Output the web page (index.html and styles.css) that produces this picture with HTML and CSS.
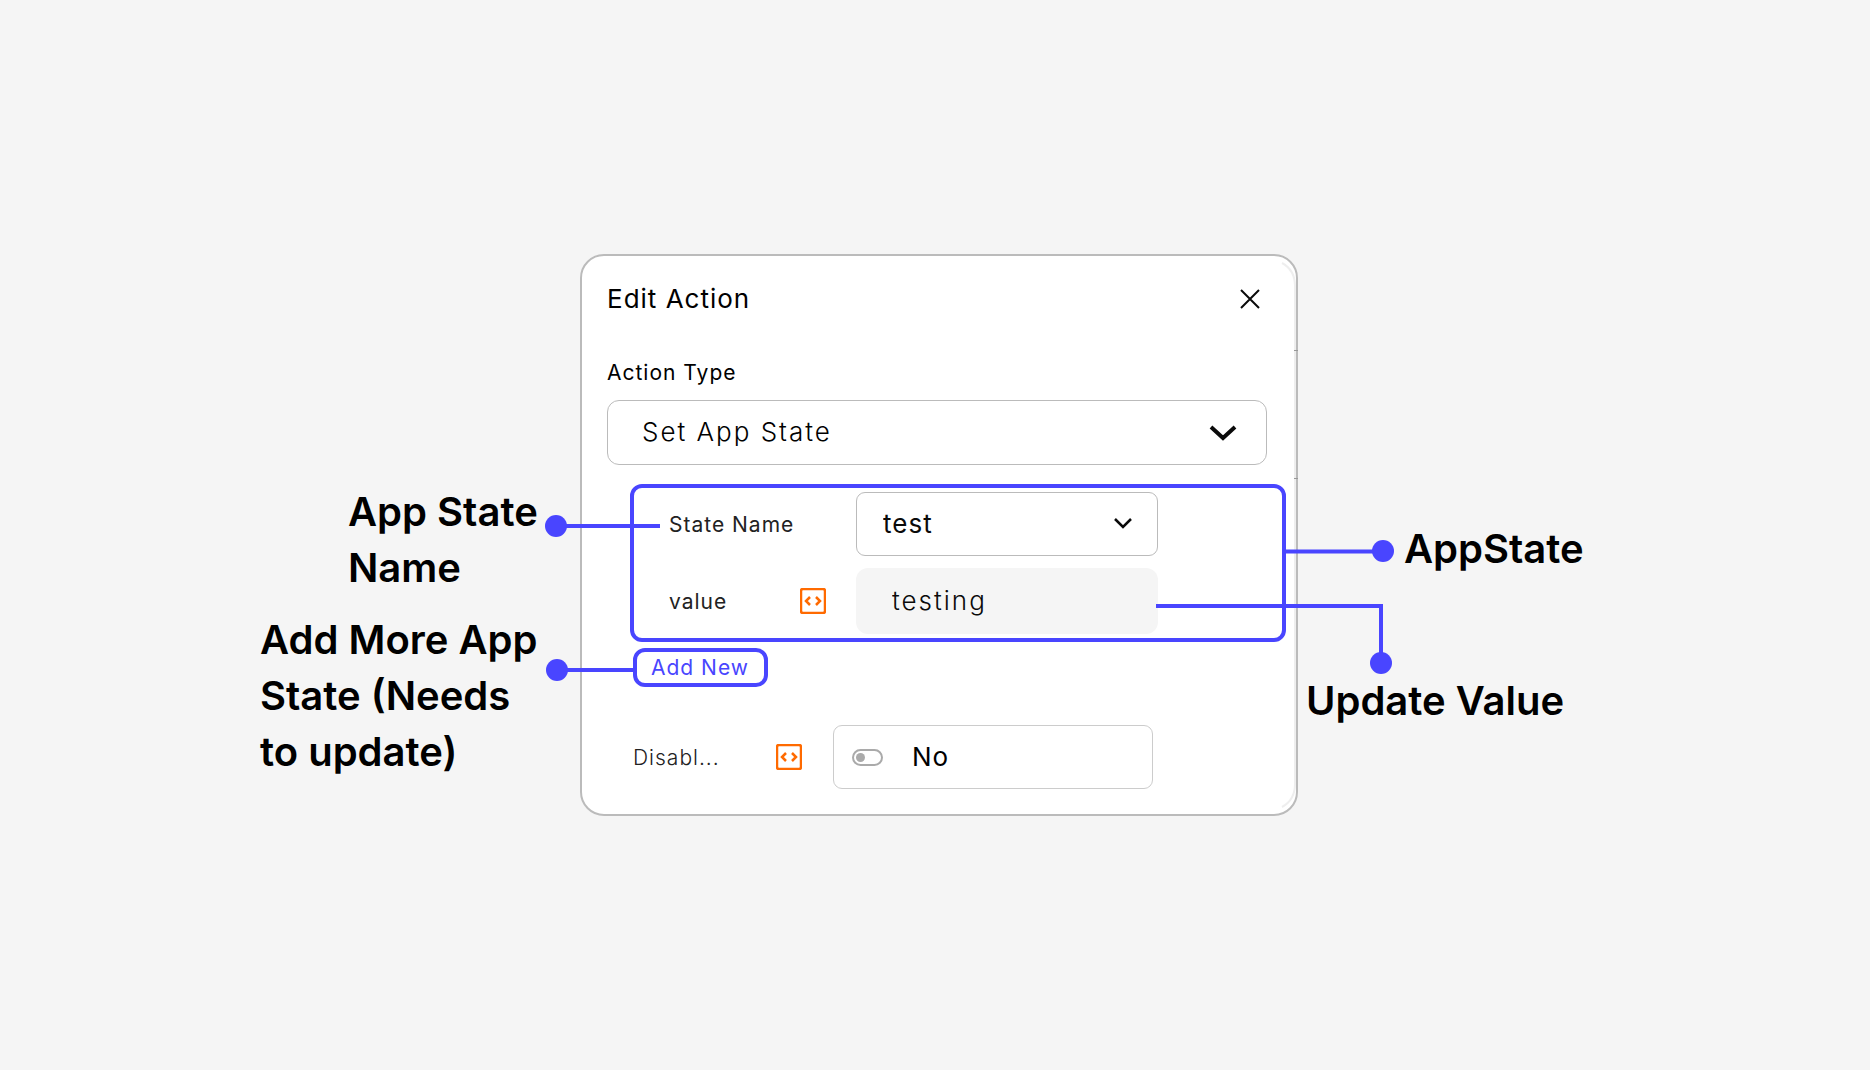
FILE: index.html
```
<!DOCTYPE html>
<html lang="en">
<head>
    <meta charset="UTF-8">
    <meta name="viewport" content="width=device-width, initial-scale=1.0">
    <title>Edit Action</title>
    <link rel="stylesheet" href="styles.css">
</head>
<body>
    <main class="guide">
        <aside class="notes notes-left">
            <p class="note note-name">App State Name</p>
            <p class="note note-add">Add More App State (Needs to update)</p>
        </aside>

        <form class="dialog">
            <header class="dialog-header">
                <h1>Edit Action</h1>
                <button type="button" class="close-btn" aria-label="Close">
                    <svg width="20" height="20" viewBox="0 0 20 20"><path d="M1 1L19 19M19 1L1 19" stroke-width="2"/></svg>
                </button>
            </header>

            <label class="type-label" for="actionType">Action Type</label>
            <div class="select-wrap type-select">
                <select id="actionType"><option>Set App State</option></select>
                <svg width="28" height="18" viewBox="0 0 28 18"><path d="M2 3L14 14L26 3" stroke-width="4"/></svg>
            </div>

            <div class="state-box">
                <label for="stateName">State Name</label>
                <div class="select-wrap name-select">
                    <select id="stateName"><option>test</option></select>
                    <svg width="20" height="12" viewBox="0 0 20 12"><path d="M2 1L10 9L18 1" stroke-width="2.5"/></svg>
                </div>
                <label for="stateValue">value</label>
                <button type="button" class="code-btn" aria-label="Bind value">
                    <svg width="26" height="26" viewBox="0 0 26 26"><rect x="1" y="1" width="24" height="24" rx="2"/><path d="M10 9L6 13L10 17M16 9L20 13L16 17"/></svg>
                </button>
                <input type="text" id="stateValue" class="value-input" value="testing">
            </div>

            <button type="button" class="add-btn">Add New</button>

            <div class="disable-row">
                <label for="disabled">Disabl...</label>
                <button type="button" class="code-btn" aria-label="Bind disabled">
                    <svg width="26" height="26" viewBox="0 0 26 26"><rect x="1" y="1" width="24" height="24" rx="2"/><path d="M10 9L6 13L10 17M16 9L20 13L16 17"/></svg>
                </button>
                <label class="toggle">
                    <input type="checkbox" id="disabled">
                    <span>No</span>
                </label>
            </div>

            <!-- scroll edge of the panel and the lines to the notes -->
            <svg class="lines" width="718" height="562" viewBox="0 0 718 562" aria-hidden="true">
                <path class="edge" d="M702 9Q715 16 715 32V530Q715 546 702 553"/>
                <path class="tick" d="M714 96.500H718M714 224.500H718"/>
                <path class="line" d="M-24 272H80M-24 416H54M704 297.500H803M576 352H801V409"/>
                <circle cx="-24" cy="272" r="11"/>
                <circle cx="-23" cy="416" r="11"/>
                <circle cx="803" cy="297" r="11"/>
                <circle cx="801" cy="409" r="11"/>
            </svg>
        </form>

        <aside class="notes notes-right">
            <p class="note note-state">AppState</p>
            <p class="note note-value">Update Value</p>
        </aside>
    </main>
</body>
</html>
```

FILE: styles.css
```
* { box-sizing: border-box; }
body { margin: 0; min-height: 100vh; display: flex; align-items: center; font-family: Inter, "Liberation Sans", sans-serif; color: #000; background: #f5f5f5; }
h1, p { margin: 0; }
button, input, select { font: inherit; letter-spacing: inherit; color: inherit; }
button { padding: 0; border: none; background: none; cursor: pointer; }
svg { display: block; fill: none; stroke: #0a0a0a; }

.guide { width: 100%; padding-left: 8px; display: grid; grid-template-columns: 1fr minmax(0, 718px) 1fr; }

.notes { display: flex; flex-direction: column; }
.notes-left { align-items: flex-end; gap: 16px; padding: 230px 32px 0 0; }
.notes-right { gap: 96px; padding: 267px 0 0 8px; }
.note { font-size: 40px; line-height: 56px; font-weight: 600; }
.note-name { width: 200px; }
.note-add { width: 288px; }
.note-state { padding-left: 98px; }

.dialog { position: relative; display: flex; flex-direction: column; padding: 27px 29px 25px 25px; border: 2px solid #bbb; border-radius: 24px; background: #fff; letter-spacing: 1px; font-size: 21px; line-height: 28px; }
.dialog-header { display: flex; justify-content: space-between; align-items: center; padding-right: 7px; margin-bottom: 44px; }
.dialog-header h1 { font-size: 26px; line-height: 32px; font-weight: 400; }
.type-label { margin-bottom: 13px; }

.select-wrap { position: relative; }
.select-wrap select { appearance: none; width: 100%; height: 100%; border: 1px solid #bbb; border-radius: 12px; background: transparent; font-size: 26px; outline: none; }
.select-wrap svg { position: absolute; top: 50%; transform: translateY(-50%); pointer-events: none; }
.type-select { height: 65px; margin-bottom: 19px; }
.type-select select { padding: 0 34px 2px; font-weight: 300; letter-spacing: 2px; }
.type-select svg { right: 30px; }
.name-select { grid-column: 3; height: 64px; }
.name-select select { padding: 0 26px; border-radius: 9px; }
.name-select svg { right: 25px; }

.state-box { display: grid; grid-template-columns: 131px 56px 302px; row-gap: 12px; align-items: center; margin: 0 -19px 6px 23px; padding: 4px 4px 4px 35px; border: 4px solid #4945ff; border-radius: 12px; color: #222; }
.state-box label { padding-top: 2px; }
.state-box select, .state-box input { color: #0a0a0a; }
.code-btn { width: 26px; }
.code-btn svg { stroke: #ff6a00; stroke-width: 2.5; }
.value-input { width: 100%; height: 66px; padding: 0 36px 2px; border: none; border-radius: 12px; background: #f5f5f5; font-size: 26px; outline: none; font-weight: 300; letter-spacing: 2px; }

.add-btn { align-self: flex-start; margin: 0 0 38px 26px; padding: 0 15px 0 14px; height: 39px; line-height: 28px; border: 4px solid #4945ff; border-radius: 12px; color: #4945ff; }

.disable-row { display: grid; grid-template-columns: 143px 57px 320px; align-items: center; padding-left: 26px; color: #222; }
.disable-row > label:first-child { padding-top: 2px; font-weight: 300; }
.toggle { display: flex; align-items: center; gap: 29px; height: 64px; padding: 0 18px; border: 1px solid #ccc; border-radius: 9px; color: #000; font-size: 26px; }
.toggle input { appearance: none; width: 31px; height: 17px; margin: 0; padding: 2px; border: 2px solid #aaa; border-radius: 9px; }
.toggle input::before { content: ""; display: block; width: 9px; height: 9px; border-radius: 50%; background: #aaa; }
.toggle input:checked::before { margin-left: auto; }

.lines { position: absolute; top: -2px; left: -2px; overflow: visible; pointer-events: none; }
.lines .edge { stroke: #eee; stroke-width: 2; }
.lines .tick { stroke: #999; stroke-width: 1; }
.lines .line { stroke: #4945ff; stroke-width: 4; }
.lines circle { fill: #4945ff; stroke: none; }
```
